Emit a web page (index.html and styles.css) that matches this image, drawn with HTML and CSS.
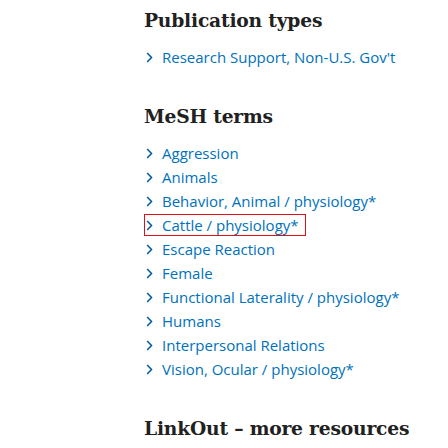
FILE: index.html
```html
<!DOCTYPE html>
<html>
<head>
<meta charset="utf-8">
<link rel="stylesheet" href="styles.css">
</head>
<body>
<main class="page">
  <section class="sec sec-pub">
    <h2 class="title">Publication types</h2>
    <ul class="terms">
      <li class="term"><svg class="chev" viewBox="0 0 7 11"><path d="M1.2 1l4.3 4.5-4.3 4.5" /></svg><a class="link">Research Support, Non-U.S. Gov't</a></li>
    </ul>
  </section>
  <section class="sec sec-mesh">
    <h2 class="title">MeSH terms</h2>
    <ul class="terms">
      <li class="term"><svg class="chev" viewBox="0 0 7 11"><path d="M1.2 1l4.3 4.5-4.3 4.5" /></svg><a class="link">Aggression</a></li>
      <li class="term"><svg class="chev" viewBox="0 0 7 11"><path d="M1.2 1l4.3 4.5-4.3 4.5" /></svg><a class="link">Animals</a></li>
      <li class="term"><svg class="chev" viewBox="0 0 7 11"><path d="M1.2 1l4.3 4.5-4.3 4.5" /></svg><a class="link">Behavior, Animal / physiology*</a></li>
      <li class="term term-hl"><svg class="chev" viewBox="0 0 7 11"><path d="M1.2 1l4.3 4.5-4.3 4.5" /></svg><a class="link">Cattle / physiology*</a></li>
      <li class="term"><svg class="chev" viewBox="0 0 7 11"><path d="M1.2 1l4.3 4.5-4.3 4.5" /></svg><a class="link">Escape Reaction</a></li>
      <li class="term"><svg class="chev" viewBox="0 0 7 11"><path d="M1.2 1l4.3 4.5-4.3 4.5" /></svg><a class="link">Female</a></li>
      <li class="term"><svg class="chev" viewBox="0 0 7 11"><path d="M1.2 1l4.3 4.5-4.3 4.5" /></svg><a class="link">Functional Laterality / physiology*</a></li>
      <li class="term"><svg class="chev" viewBox="0 0 7 11"><path d="M1.2 1l4.3 4.5-4.3 4.5" /></svg><a class="link">Humans</a></li>
      <li class="term"><svg class="chev" viewBox="0 0 7 11"><path d="M1.2 1l4.3 4.5-4.3 4.5" /></svg><a class="link">Interpersonal Relations</a></li>
      <li class="term"><svg class="chev" viewBox="0 0 7 11"><path d="M1.2 1l4.3 4.5-4.3 4.5" /></svg><a class="link">Vision, Ocular / physiology*</a></li>
    </ul>
  </section>
  <section class="sec sec-link">
    <h2 class="title">LinkOut – more resources</h2>
  </section>
</main>
</body>
</html>
```
FILE: styles.css
```css
html, body { margin: 0; padding: 0; background: #fff; }
.page {
  padding: 7px 0 0 145px;
  font-family: "Open Sans", "Noto Sans", sans-serif;
}
.title {
  margin: 0 0 0 -1px;
  font-family: "DejaVu Serif", serif;
  font-weight: bold;
  font-size: 18.7px;
  line-height: 26px;
  color: #212121;
  letter-spacing: -0.2px;
}
.terms { list-style: none; margin: 12px 0 0 0; padding: 0; }
.term {
  display: flex;
  align-items: center;
  height: 24px;
  font-size: 15px;
  line-height: 20px;
  color: #0071bc;
}
.chev {
  flex: none;
  width: 7px; height: 11px;
  margin: 0 9px 0 1px;
  fill: none; stroke: #0a5da3; stroke-width: 1.6;
}
.link { color: #0071bc; }
.term-hl {
  border: 1px solid #e0101a;
  box-sizing: border-box;
  width: 162px;
  height: 22px;
  margin: 1px 0 1px -1px;
}
.sec-mesh { margin-top: 34px; }
.sec-link { margin-top: 34px; }
```
